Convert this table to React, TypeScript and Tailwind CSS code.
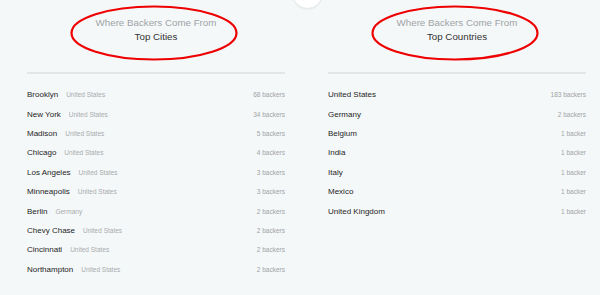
import React from "react";

type City = { name: string; country: string; count: string };
type Country = { name: string; count: string };

const cities: City[] = [
  { name: "Brooklyn", country: "United States", count: "68 backers" },
  { name: "New York", country: "United States", count: "34 backers" },
  { name: "Madison", country: "United States", count: "5 backers" },
  { name: "Chicago", country: "United States", count: "4 backers" },
  { name: "Los Angeles", country: "United States", count: "3 backers" },
  { name: "Minneapolis", country: "United States", count: "3 backers" },
  { name: "Berlin", country: "Germany", count: "2 backers" },
  { name: "Chevy Chase", country: "United States", count: "2 backers" },
  { name: "Cincinnati", country: "United States", count: "2 backers" },
  { name: "Northampton", country: "United States", count: "2 backers" },
];

const countries: Country[] = [
  { name: "United States", count: "183 backers" },
  { name: "Germany", count: "2 backers" },
  { name: "Belgium", count: "1 backer" },
  { name: "India", count: "1 backer" },
  { name: "Italy", count: "1 backer" },
  { name: "Mexico", count: "1 backer" },
  { name: "United Kingdom", count: "1 backer" },
];

function Heading({ title }: { title: string }) {
  return (
    <div className="relative flex flex-col items-center pt-[16px]">
      <div className="text-[9.75px] leading-[14px] text-[#a0a3a5]">Where Backers Come From</div>
      <div className="text-[9.75px] leading-[14px] text-[#333333]">{title}</div>
      {/* hand-drawn red ring around the heading */}
      <svg
        className="absolute left-[42px] top-[4px] pointer-events-none"
        width="170"
        height="58"
        viewBox="0 0 170 58"
      >
        <ellipse cx="85" cy="29" rx="82.5" ry="26.5" fill="none" stroke="#ee0000" strokeWidth="2.2" />
      </svg>
    </div>
  );
}

function Column({ title, children }: { title: string; children: React.ReactNode }) {
  return (
    <div className="w-[258px] flex flex-col">
      <Heading title={title} />
      <div className="mt-[28px] h-[1.5px] bg-[#e2e6e8]" />
      <div className="mt-[12px] flex flex-col">{children}</div>
    </div>
  );
}

export default function App() {
  return (
    <div
      className="relative w-[600px] h-[295px] overflow-hidden bg-[#f5f8f9]"
      style={{ fontFamily: '"Liberation Sans", Arial, sans-serif' }}
    >
      <div className="absolute left-[292px] top-[-22px] w-[31px] h-[31px] rounded-full bg-white border border-[#e6eaec] shadow-[0_1px_1px_rgba(0,0,0,0.04)]" />
      <div className="flex gap-[43px] pl-[27px]">
        <Column title="Top Cities">
          {cities.map((c) => (
            <div key={c.name} className="h-[19.4px] flex items-center">
              <span className="text-[8px] text-[#1e1e1e]">{c.name}</span>
              <span className="ml-[8px] text-[6.5px] text-[#a8abad]">{c.country}</span>
              <span className="ml-auto text-[6.5px] text-[#a0a3a5]">{c.count}</span>
            </div>
          ))}
        </Column>
        <Column title="Top Countries">
          {countries.map((c) => (
            <div key={c.name} className="h-[19.4px] flex items-center">
              <span className="text-[8px] text-[#1e1e1e]">{c.name}</span>
              <span className="ml-auto text-[6.5px] text-[#a0a3a5]">{c.count}</span>
            </div>
          ))}
        </Column>
      </div>
    </div>
  );
}
